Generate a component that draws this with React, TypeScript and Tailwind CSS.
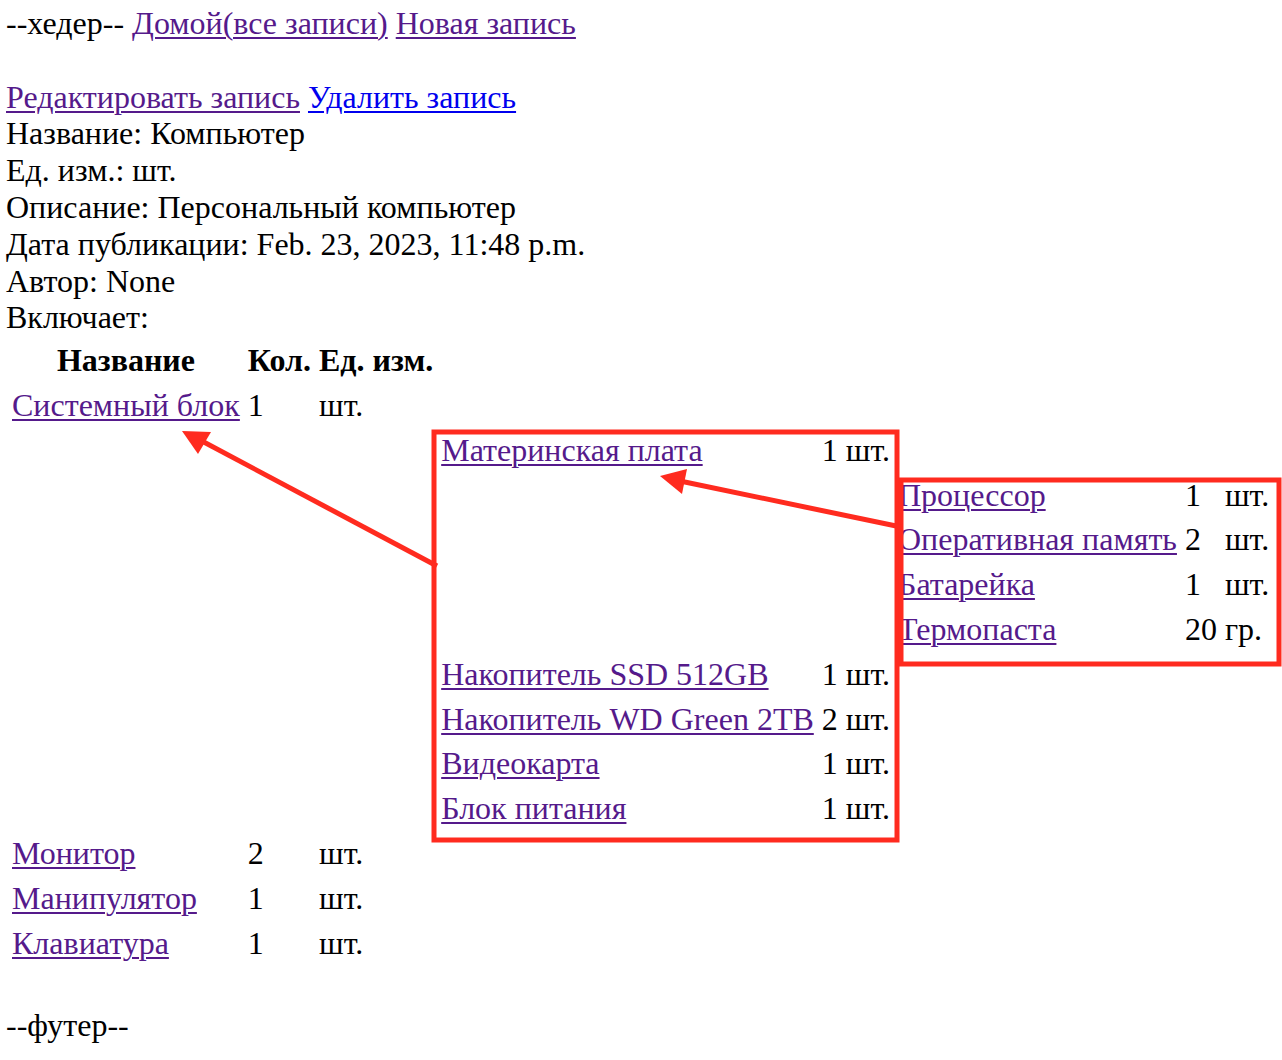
const visited = "text-[#551a8b] underline decoration-2 underline-offset-[3px]";

type Row = { lvl: number; name?: string; qty?: string; unit?: string };

const rows: Row[] = [
  { lvl: 0, name: "Системный блок", qty: "1", unit: "шт." },
  { lvl: 1, name: "Материнская плата", qty: "1", unit: "шт." },
  { lvl: 2, name: "Процессор", qty: "1", unit: "шт." },
  { lvl: 2, name: "Оперативная память", qty: "2", unit: "шт." },
  { lvl: 2, name: "Батарейка", qty: "1", unit: "шт." },
  { lvl: 2, name: "Термопаста", qty: "20", unit: "гр." },
  { lvl: 1, name: "Накопитель SSD 512GB", qty: "1", unit: "шт." },
  { lvl: 1, name: "Накопитель WD Green 2TB", qty: "2", unit: "шт." },
  { lvl: 1, name: "Видеокарта", qty: "1", unit: "шт." },
  { lvl: 1, name: "Блок питания", qty: "1", unit: "шт." },
  { lvl: 0, name: "Монитор", qty: "2", unit: "шт." },
  { lvl: 0, name: "Манипулятор", qty: "1", unit: "шт." },
  { lvl: 0, name: "Клавиатура", qty: "1", unit: "шт." },
];

function Annotations() {
  const red = "#ff2b1f";
  return (
    <svg className="pointer-events-none absolute left-0 top-0" width="1282" height="1060">
      <rect x="434" y="432" width="463" height="408" fill="none" stroke={red} strokeWidth="5" />
      <rect x="901" y="480" width="378" height="184" fill="none" stroke={red} strokeWidth="5" />
      <line x1="437" y1="566" x2="200" y2="440" stroke={red} strokeWidth="5" />
      <polygon points="182,431 211,432 198,454" fill={red} />
      <line x1="901" y1="527" x2="680" y2="481" stroke={red} strokeWidth="5" />
      <polygon points="660,476 687,469 682,494" fill={red} />
    </svg>
  );
}

export default function App() {
  return (
    <div className="relative h-[1060px] w-[1282px] overflow-hidden bg-white font-['Liberation_Serif','Times_New_Roman',serif] text-[32px] leading-[1.15] text-black">
      <div className="pl-[6px] pt-[5px]">
        <div>
          --хедер-- <a className={visited}>Домой(все записи)</a> <a className={visited}>Новая запись</a>
        </div>
        <br />
        <div>
          <a className={visited}>Редактировать запись</a>{" "}
          <a className="text-[#0000ee] underline decoration-2 underline-offset-[3px]">Удалить запись</a>
        </div>
        <div>Название: Компьютер</div>
        <div>Ед. изм.: шт.</div>
        <div>Описание: Персональный компьютер</div>
        <div>Дата публикации: Feb. 23, 2023, 11:48 p.m.</div>
        <div>Автор: None</div>
        <div>Включает:</div>
        <table className="border-separate border-spacing-[4px] whitespace-nowrap">
          <thead>
            <tr>
              <th className="p-[2px] text-center font-bold">Название</th>
              <th className="p-[2px] text-center font-bold">Кол.</th>
              <th className="p-[2px] text-center font-bold">Ед. изм.</th>
            </tr>
          </thead>
          <tbody>
            {rows.map((r, i) => (
              <tr key={i}>
                {Array.from({ length: r.lvl * 3 }).map((_, j) => (
                  <td key={j} className="p-[2px]" />
                ))}
                <td className="p-[2px] text-left align-middle">
                  <a className={visited}>{r.name}</a>
                </td>
                <td className="p-[2px] text-left align-middle">{r.qty}</td>
                <td className="p-[2px] text-left align-middle">{r.unit}</td>
              </tr>
            ))}
          </tbody>
        </table>
        <br />
        <div className="mt-[3px]">--футер--</div>
      </div>
      <Annotations />
    </div>
  );
}
